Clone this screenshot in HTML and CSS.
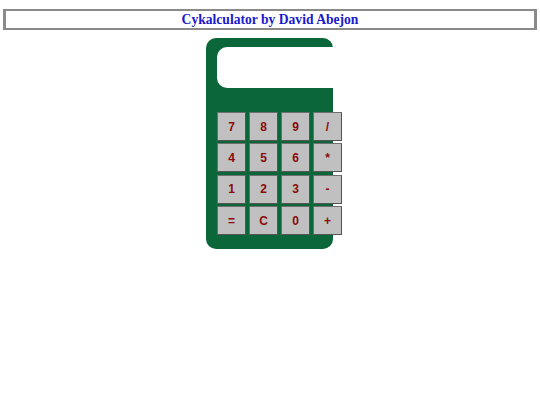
FILE: index.html
```html
<!DOCTYPE html>
<html>
<head>
<meta charset="utf-8">
<link rel="stylesheet" href="styles.css">
</head>
<body>
<h1 class="title">Cykalculator by David Abejon</h1>
<div class="calc">
  <div class="display"></div>
  <div class="keys">
    <button class="key">7</button><button class="key">8</button><button class="key">9</button><button class="key">/</button>
    <button class="key">4</button><button class="key">5</button><button class="key">6</button><button class="key">*</button>
    <button class="key">1</button><button class="key">2</button><button class="key">3</button><button class="key">-</button>
    <button class="key">=</button><button class="key">C</button><button class="key">0</button><button class="key">+</button>
  </div>
</div>
</body>
</html>
```
FILE: styles.css
```css
html, body { margin: 0; padding: 0; background: #fff; }
body { padding: 9px 3px 0 3px; }
.title {
  margin: 0;
  border: 3px solid #8a8a8a;
  border-top-width: 2px;
  border-bottom-width: 2px;
  height: 15px;
  line-height: 15px;
  padding: 1px 0;
  text-align: center;
  font-family: "Liberation Serif", serif;
  font-weight: bold;
  font-size: 13.6px;
  color: #1a1acc;
}
.calc {
  box-sizing: border-box;
  width: 127px;
  height: 211px;
  margin: 8px 0 0 203px;
  background: #0b663a;
  border-radius: 10px;
  padding: 9px 0 0 11px;
}
.display {
  width: 126px;
  height: 41px;
  background: #fff;
  border-radius: 10px;
}
.keys {
  margin-top: 24px;
  display: grid;
  grid-template-columns: repeat(4, 29px);
  grid-auto-rows: 29px;
  column-gap: 3px;
  row-gap: 2.4px;
  width: 130px;
}
.key {
  box-sizing: border-box;
  margin: 0;
  padding: 0;
  width: 29px;
  height: 29px;
  background: #c0c0c0;
  border: 1px solid #6e6e6e;
  border-right-color: #555;
  border-bottom-color: #555;
  font-family: "Liberation Sans", Arial, sans-serif;
  font-weight: bold;
  font-size: 12px;
  color: #8b0a0a;
}
```
